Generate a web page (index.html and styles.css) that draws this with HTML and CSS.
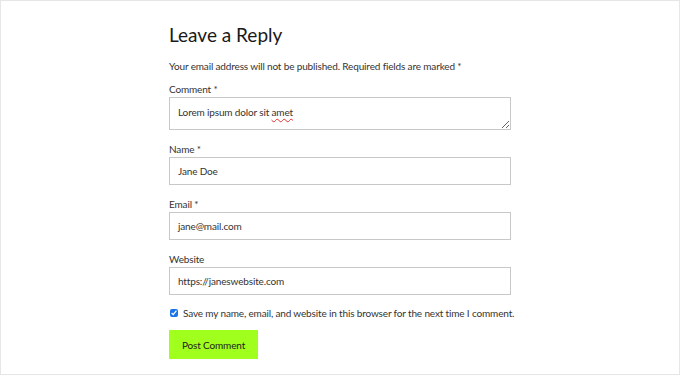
FILE: index.html
```html
<!DOCTYPE html>
<html lang="en">
<head>
<meta charset="utf-8">
<title>Leave a Reply</title>
<link rel="stylesheet" href="styles.css">
</head>
<body>
<div class="page">
  <form class="reply">
    <h3 class="title">Leave a Reply</h3>
    <p class="notice">Your email address will not be published. Required fields are marked *</p>
    <label class="label">Comment *</label>
    <div class="textarea">Lorem ipsum dolor sit <span class="typo">amet</span></div>
    <label class="label">Name *</label>
    <div class="input">Jane Doe</div>
    <label class="label">Email *</label>
    <div class="input">jane@mail.com</div>
    <label class="label">Website</label>
    <div class="input">https://janeswebsite.com</div>
    <label class="consent"><input type="checkbox" class="check" checked> Save my name, email, and website in this browser for the next time I comment.</label>
    <button type="button" class="submit">Post Comment</button>
  </form>
</div>
</body>
</html>
```

FILE: styles.css
```css
html, body {
  margin: 0;
  padding: 0;
}
body {
  font-family: Lato, "Open Sans", sans-serif;
  color: #333;
  background: #fff;
  letter-spacing: -0.15px;
}
.page {
  box-sizing: border-box;
  width: 680px;
  height: 375px;
  border: 1px solid #e6e6e6;
  overflow: hidden;
}
.reply {
  width: 342px;
  margin: 0 auto;
  padding-top: 22px;
  display: flex;
  flex-direction: column;
  align-items: flex-start;
}
.title {
  margin: 0;
  font-size: 19px;
  line-height: 24px;
  font-weight: 400;
  color: #1a1a1a;
  letter-spacing: 0;
}
.notice {
  margin: 12px 0 0;
  font-size: 10px;
  line-height: 14px;
}
.label {
  display: block;
  margin-top: 12px;
  margin-bottom: 1px;
  font-size: 10px;
  line-height: 14px;
}
.notice + .label {
  margin-top: 9px;
}
.textarea, .input {
  box-sizing: border-box;
  width: 342px;
  border: 1px solid #c8c8c8;
  background: #fff;
  font-size: 10px;
  line-height: 14px;
  padding: 6px 8px;
  color: #333;
}
.textarea {
  height: 33px;
  resize: vertical;
  overflow: auto;
  padding-top: 7px;
}
.input {
  height: 28px;
}
.typo {
  text-decoration: underline wavy #e03030;
  text-decoration-thickness: 1px;
  text-underline-offset: 2px;
}
.consent {
  display: flex;
  align-items: center;
  gap: 5px;
  margin-top: 11px;
  font-size: 10px;
  line-height: 14px;
  white-space: nowrap;
}
.check {
  width: 8px;
  height: 8px;
  margin: 0 0 0 1px;
  accent-color: #1a73e8;
}
.submit {
  margin-top: 10px;
  width: 89px;
  height: 29px;
  border: 0;
  padding: 0;
  background: #a0ff1c;
  color: #222;
  font-family: inherit;
  font-size: 10px;
  letter-spacing: -0.15px;
  cursor: pointer;
}
```
